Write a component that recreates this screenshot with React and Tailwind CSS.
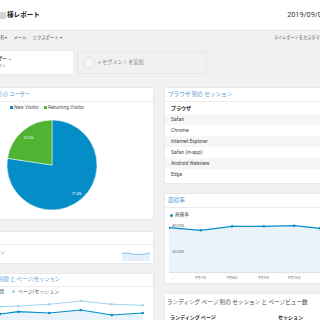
export default function App() {
  const rows = ["Safari", "Chrome", "Internet Explorer", "Safari (in-app)", "Android Webview", "Edge"];
  const bounce = [[0, 8.7], [31.7, 11.3], [63, 7.3], [94.7, 7.3], [125.3, 6.7], [151, 9.3]];
  const light = [[0, 10.7], [18.3, 10], [49.3, 8.3], [80.7, 5], [111.7, 8.3], [142.7, 9.3]];
  const dark = [[0, 18], [18.3, 15.7], [49.3, 17], [80.7, 14], [111.7, 19], [142.7, 17]];
  const pts = (a) => a.map((p) => p.join(",")).join(" ");
  return (
    <div className="w-[320px] h-[320px] overflow-hidden bg-[#f1f1f1] font-['Roboto','Noto_Sans_CJK_JP',sans-serif] text-[#333]">
      {/* header */}
      <div className="h-[31px] bg-white border-b border-[#e3e3e3] flex items-center justify-between">
        <div className="flex items-center gap-[1px]">
          <span className="w-[6px] h-[7px] bg-[#d4d4d4] blur-[0.6px]" />
          <span className="text-[6.6px] font-bold text-[#222] leading-none">様レポート</span>
        </div>
        <span className="text-[7.3px] text-[#333] whitespace-nowrap -mr-[6px] leading-none">2019/09/06</span>
      </div>
      {/* toolbar */}
      <div className="h-[15px] flex items-center text-[4.4px] text-[#555] whitespace-nowrap leading-none">
        <div className="flex items-center gap-[6px] -ml-[4.5px]">
          <span>共有 ▾</span>
          <span>メール</span>
          <span>エクスポート ▾</span>
        </div>
        <span className="ml-auto -mr-[8px] shrink-0 text-[4.2px]">マイレポートをカスタマイズ</span>
      </div>
      {/* segments */}
      <div className="mt-[5px] h-[23px] flex">
        <div className="w-[73px] bg-white shadow-[0_0_1px_rgba(0,0,0,0.15)] flex flex-col justify-center gap-[2px] leading-none">
          <div className="w-[12px] flex justify-end whitespace-nowrap text-[4.6px] font-medium text-[#333]">
            <span>すべてのユーザー ⌄</span>
          </div>
          <div className="w-[6px] flex justify-end whitespace-nowrap text-[4px] text-[#777]">
            <span>100.00% セッション</span>
          </div>
        </div>
        <div className="ml-[4px] w-[130px] border border-[#e6e6e6] flex items-center pl-[5px] gap-[3px]">
          <span className="w-[12px] h-[12px] rounded-full border-[1.5px] border-[#dedede] bg-[#f6f6f6]" />
          <span className="text-[5.2px] text-[#888] whitespace-nowrap leading-none">+ セグメントを追加</span>
        </div>
      </div>
      {/* main */}
      <div className="mt-[14px] flex gap-[12px] items-start">
        {/* left column */}
        <div className="w-[153px] shrink-0 flex flex-col">
          <div className="h-[131px] bg-white shadow-[0_0_1px_rgba(0,0,0,0.2)]">
            <div className="h-[14px] border-b border-[#ececec] flex items-center">
              <div className="w-[30px] flex justify-end whitespace-nowrap text-[5.2px] text-[#5a97d2] leading-none">
                <span>ユーザー タイプ 別 の ユーザー</span>
              </div>
            </div>
            <div className="mt-[3px] h-[5px] flex items-center pl-[10px] text-[4.9px] text-[#555] leading-none whitespace-nowrap">
              <span className="w-[2.5px] h-[2.5px] bg-[#058dc7] mr-[1.5px]" />
              <span>New Visitor</span>
              <span className="w-[2.5px] h-[2.5px] bg-[#50b432] ml-[5px] mr-[1.5px]" />
              <span>Returning Visitor</span>
            </div>
            <svg className="ml-[6.5px] mt-[10px]" width="90" height="90" viewBox="0 0 90 90">
              <path d="M45,45 L45,0 A45,45 0 1 1 0.5,38.3 Z" fill="#058dc7" stroke="#fff" strokeWidth="0.5" />
              <path d="M45,45 L0.5,38.3 A45,45 0 0 1 45,0 Z" fill="#50b432" stroke="#fff" strokeWidth="0.5" />
              <text x="21.5" y="18.5" fontSize="3.6" fill="#fff" textAnchor="middle">22.6%</text>
              <text x="69.5" y="74.5" fontSize="3.6" fill="#fff" textAnchor="middle">77.4%</text>
            </svg>
          </div>
          <div className="mt-[13px] h-[31px] bg-white shadow-[0_0_1px_rgba(0,0,0,0.2)]">
            <div className="h-[13px] border-b border-[#ececec]" />
            <div className="h-[18px] flex items-end justify-between pb-[2px]">
              <div className="self-center w-[5px] flex justify-end whitespace-nowrap text-[4.4px] text-[#888] leading-none">
                <span>セッション</span>
              </div>
              <svg className="mr-[3px]" width="28" height="11" viewBox="0 0 28 11">
                <path d="M0,3.5 L6,3 L12,4.2 L18,4.6 L23,4 L28,3 L28,11 L0,11 Z" fill="#e6f0fa" />
                <path d="M0,3.5 L6,3 L12,4.2 L18,4.6 L23,4 L28,3" fill="none" stroke="#5aa8de" strokeWidth="0.7" />
              </svg>
            </div>
          </div>
          <div className="mt-[11px] h-[60px] bg-white shadow-[0_0_1px_rgba(0,0,0,0.2)]">
            <div className="h-[13px] border-b border-[#ececec] flex items-center">
              <div className="w-[60px] flex justify-end whitespace-nowrap text-[5.2px] text-[#5a97d2] leading-none">
                <span>平均セッション時間 と ページ/セッション</span>
              </div>
            </div>
            <div className="h-[9px] flex items-center text-[4.9px] text-[#555] leading-none whitespace-nowrap">
              <div className="w-[4px] flex justify-end">
                <span>平均セッション時間</span>
              </div>
              <span className="ml-[8px] w-[3px] h-[3px] rounded-full bg-[#9fd3ef] mr-[3px]" />
              <span>ページ/セッション</span>
            </div>
            <svg width="153" height="26" viewBox="0 0 153 26">
              <polygon points={`${pts(dark)} 142.7,26 0,26`} fill="#e8f3fb" />
              <polyline points={pts(light)} fill="none" stroke="#9fd3ef" strokeWidth="1" />
              <polyline points={pts(dark)} fill="none" stroke="#058dc7" strokeWidth="1.2" />
              {light.map(([x, y], i) => (
                <circle key={"l" + i} cx={x} cy={y} r="1.2" fill="#9fd3ef" />
              ))}
              {dark.map(([x, y], i) => (
                <circle key={"d" + i} cx={x} cy={y} r="1.3" fill="#058dc7" />
              ))}
            </svg>
          </div>
        </div>
        {/* right column */}
        <div className="w-[200px] shrink-0 flex flex-col">
          <div className="h-[95px] bg-white shadow-[0_0_1px_rgba(0,0,0,0.2)]">
            <div className="h-[14px] border-b border-[#ececec] flex items-center pl-[3px] text-[5.6px] text-[#5a97d2] whitespace-nowrap leading-none">
              ブラウザ 別の セッション
            </div>
            <div className="h-[12px] flex items-center pl-[6px] text-[5px] font-bold text-[#222] leading-none">ブラウザ</div>
            {rows.map((r, i) => (
              <div
                key={r}
                className={`h-[11px] flex items-center pl-[6px] text-[5px] text-[#444] leading-none ${i % 2 === 0 ? "bg-[#f6f6f6]" : "bg-white"}`}
              >
                {r}
              </div>
            ))}
          </div>
          <div className="mt-[11px] h-[89px] bg-white shadow-[0_0_1px_rgba(0,0,0,0.2)]">
            <div className="h-[14px] border-b border-[#ececec] flex items-center pl-[3px] text-[5.6px] text-[#5a97d2] leading-none">
              直帰率
            </div>
            <div className="mt-[4px] h-[6px] flex items-center pl-[5px] text-[4.6px] text-[#444] leading-none">
              <span className="w-[3px] h-[3px] rounded-full bg-[#058dc7] mr-[2px]" />
              <span>直帰率</span>
            </div>
            <svg className="ml-[4px] mt-[1px]" width="151" height="62" viewBox="0 0 151 62">
              <polygon points={`${pts(bounce)} 151,53.7 0,53.7`} fill="#eaf2fa" />
              <line x1="0" y1="53.7" x2="151" y2="53.7" stroke="#c8c8c8" strokeWidth="0.5" />
              <polyline points={pts(bounce)} fill="none" stroke="#058dc7" strokeWidth="1.2" />
              {bounce.map(([x, y], i) => (
                <circle key={i} cx={x} cy={y} r="1.3" fill="#058dc7" />
              ))}
              <text x="3" y="8.3" fontSize="3.8" fill="#666">40.00%</text>
              <text x="3" y="33.5" fontSize="3.8" fill="#666">20.00%</text>
              <text x="2" y="59.5" fontSize="3.6" fill="#888">…</text>
              <text x="31.7" y="59.5" fontSize="3.6" fill="#777" textAnchor="middle">9月7日</text>
              <text x="63" y="59.5" fontSize="3.6" fill="#777" textAnchor="middle">9月8日</text>
              <text x="94.7" y="59.5" fontSize="3.6" fill="#777" textAnchor="middle">9月9日</text>
              <text x="125.3" y="59.5" fontSize="3.6" fill="#777" textAnchor="middle">9月10日</text>
            </svg>
          </div>
          <div className="mt-[11px] h-[40px] bg-white shadow-[0_0_1px_rgba(0,0,0,0.2)]">
            <div className="h-[18px] flex items-center pl-[2px] text-[5.6px] text-[#444] whitespace-nowrap leading-none">
              ランディング ページ 別の セッション と ページビュー数
            </div>
            <div className="h-[10px] flex items-center pl-[5px] text-[5px] font-bold text-[#222] leading-none whitespace-nowrap">
              <span className="w-[108px]">ランディング ページ</span>
              <span>セッション</span>
            </div>
          </div>
        </div>
      </div>
    </div>
  );
}
